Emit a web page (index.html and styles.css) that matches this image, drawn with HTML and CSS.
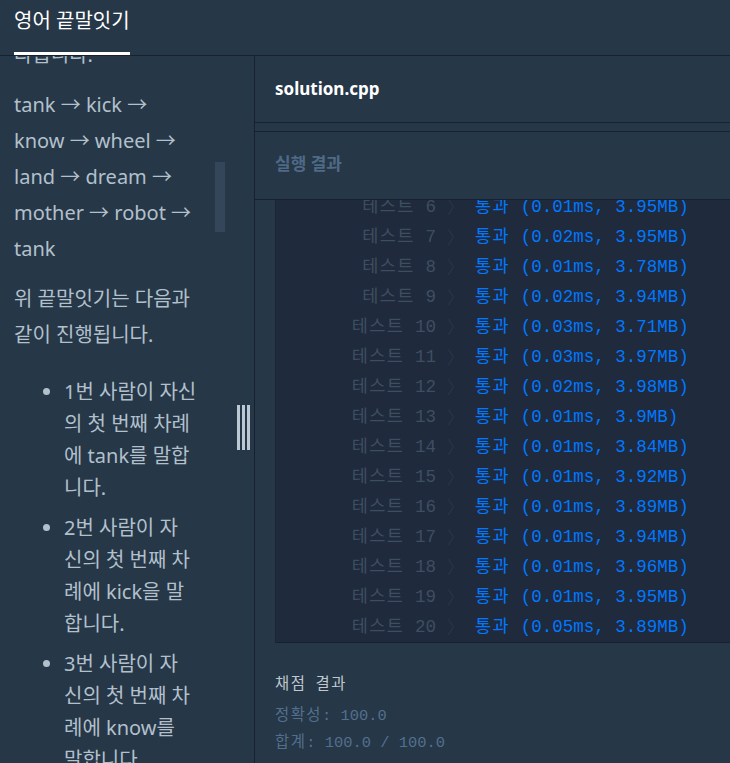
FILE: index.html
```html
<!DOCTYPE html>
<html lang="ko">
<head>
<meta charset="utf-8">
<title>영어 끝말잇기</title>
<link rel="stylesheet" href="styles.css">
</head>
<body>
<header class="topbar">
  <div class="tab">영어 끝말잇기</div>
</header>
<div class="main">
  <section class="left">
    <div class="desc">
      <p class="para">다릅니다.</p>
      <p class="para">tank → kick →<br>know → wheel →<br>land → dream →<br>mother → robot →<br>tank</p>
      <p class="para">위 끝말잇기는 다음과<br>같이 진행됩니다.</p>
      <ul class="steps">
        <li>1번 사람이 자신<br>의 첫 번째 차례<br>에 tank를 말합<br>니다.</li>
        <li>2번 사람이 자<br>신의 첫 번째 차<br>례에 kick을 말<br>합니다.</li>
        <li>3번 사람이 자<br>신의 첫 번째 차<br>례에 know를<br>말합니다.</li>
      </ul>
    </div>
    <div class="thumb"></div>
    <div class="grip"><span></span><span></span><span></span></div>
  </section>
  <section class="right">
    <div class="filebar">solution.cpp</div>
    <div class="editor-gap"></div>
    <div class="result-head">실행 결과</div>
    <div class="result-wrap">
      <div class="result-box">
        <div class="rows">
          <div class="row"><span class="lbl"><span class="k">테스트</span> 6</span><span class="arr">〉</span><span class="ok"><span class="k">통과</span> (0.01ms, 3.95MB)</span></div>
          <div class="row"><span class="lbl"><span class="k">테스트</span> 7</span><span class="arr">〉</span><span class="ok"><span class="k">통과</span> (0.02ms, 3.95MB)</span></div>
          <div class="row"><span class="lbl"><span class="k">테스트</span> 8</span><span class="arr">〉</span><span class="ok"><span class="k">통과</span> (0.01ms, 3.78MB)</span></div>
          <div class="row"><span class="lbl"><span class="k">테스트</span> 9</span><span class="arr">〉</span><span class="ok"><span class="k">통과</span> (0.02ms, 3.94MB)</span></div>
          <div class="row"><span class="lbl"><span class="k">테스트</span> 10</span><span class="arr">〉</span><span class="ok"><span class="k">통과</span> (0.03ms, 3.71MB)</span></div>
          <div class="row"><span class="lbl"><span class="k">테스트</span> 11</span><span class="arr">〉</span><span class="ok"><span class="k">통과</span> (0.03ms, 3.97MB)</span></div>
          <div class="row"><span class="lbl"><span class="k">테스트</span> 12</span><span class="arr">〉</span><span class="ok"><span class="k">통과</span> (0.02ms, 3.98MB)</span></div>
          <div class="row"><span class="lbl"><span class="k">테스트</span> 13</span><span class="arr">〉</span><span class="ok"><span class="k">통과</span> (0.01ms, 3.9MB)</span></div>
          <div class="row"><span class="lbl"><span class="k">테스트</span> 14</span><span class="arr">〉</span><span class="ok"><span class="k">통과</span> (0.01ms, 3.84MB)</span></div>
          <div class="row"><span class="lbl"><span class="k">테스트</span> 15</span><span class="arr">〉</span><span class="ok"><span class="k">통과</span> (0.01ms, 3.92MB)</span></div>
          <div class="row"><span class="lbl"><span class="k">테스트</span> 16</span><span class="arr">〉</span><span class="ok"><span class="k">통과</span> (0.01ms, 3.89MB)</span></div>
          <div class="row"><span class="lbl"><span class="k">테스트</span> 17</span><span class="arr">〉</span><span class="ok"><span class="k">통과</span> (0.01ms, 3.94MB)</span></div>
          <div class="row"><span class="lbl"><span class="k">테스트</span> 18</span><span class="arr">〉</span><span class="ok"><span class="k">통과</span> (0.01ms, 3.96MB)</span></div>
          <div class="row"><span class="lbl"><span class="k">테스트</span> 19</span><span class="arr">〉</span><span class="ok"><span class="k">통과</span> (0.01ms, 3.95MB)</span></div>
          <div class="row"><span class="lbl"><span class="k">테스트</span> 20</span><span class="arr">〉</span><span class="ok"><span class="k">통과</span> (0.05ms, 3.89MB)</span></div>
        </div>
      </div>
      <div class="score">
        <div class="score-title"><span class="k">채점</span> <span class="k">결과</span></div>
        <div class="score-line"><span class="k">정확성</span>: 100.0</div>
        <div class="score-line"><span class="k">합계</span>: 100.0 / 100.0</div>
      </div>
    </div>
  </section>
</div>
</body>
</html>
```

FILE: styles.css
```css
html, body {
  margin: 0;
  padding: 0;
}
body {
  width: 730px;
  height: 763px;
  overflow: hidden;
  background: #263747;
  font-family: "Noto Sans", "Noto Sans CJK KR", sans-serif;
  display: flex;
  flex-direction: column;
}
.topbar {
  height: 55px;
  border-bottom: 1px solid #172130;
  display: flex;
  flex-shrink: 0;
}
.tab {
  margin-left: 14px;
  height: 55px;
  box-sizing: border-box;
  border-bottom: 3px solid #ffffff;
  color: #ffffff;
  font-size: 20px;
  line-height: 42px;
  white-space: nowrap;
}
.main {
  flex: 1;
  display: flex;
  min-height: 0;
}
.left {
  width: 254px;
  flex-shrink: 0;
  border-right: 1px solid #172130;
  overflow: hidden;
  position: relative;
}
.desc {
  margin-top: -19px;
  padding-left: 14px;
  color: #b2c0cc;
  font-size: 20px;
  line-height: 36px;
  white-space: nowrap;
}
.para {
  margin: 0 0 14px 0;
}
.steps {
  margin: 23px 0 0 0;
  padding-left: 50px;
  line-height: 32px;
}
.steps li {
  margin-bottom: 8px;
}
.thumb {
  position: absolute;
  left: 215px;
  top: 106px;
  width: 10px;
  height: 70px;
  background: #34465a;
}
.grip {
  position: absolute;
  left: 237px;
  top: 349px;
  height: 45px;
  display: flex;
  gap: 2px;
}
.grip span {
  width: 3px;
  height: 45px;
  background: #bcc8d3;
}
.right {
  flex: 1;
  display: flex;
  flex-direction: column;
  min-width: 0;
}
.filebar {
  height: 66px;
  border-bottom: 1px solid #172130;
  padding-left: 20px;
  color: #ffffff;
  font-weight: 700;
  font-size: 17px;
  line-height: 66px;
  flex-shrink: 0;
}
.editor-gap {
  height: 8px;
  border-bottom: 1px solid #172130;
  flex-shrink: 0;
}
.result-head {
  height: 67px;
  border-bottom: 1px solid #172130;
  padding-left: 20px;
  color: #4f6a86;
  font-weight: 700;
  font-size: 17px;
  line-height: 64px;
  flex-shrink: 0;
}
.result-wrap {
  padding-left: 20px;
  font-family: "Liberation Mono", "Noto Sans CJK KR", monospace;
}
.result-box {
  height: 442px;
  background: #1f2a3c;
  border-left: 1px solid #1a2433;
  border-bottom: 1px solid #172130;
  overflow: hidden;
}
.rows {
  margin-top: -8px;
}
.row {
  display: grid;
  grid-template-columns: 160px 10px auto;
  column-gap: 11px;
  height: 30px;
  line-height: 30px;
  font-size: 17.5px;
  white-space: nowrap;
}
.k {
  letter-spacing: 1.5px;
}
.lbl {
  text-align: right;
  color: #3e4e61;
}
.arr {
  color: #2c3a4b;
  font-family: "Noto Sans CJK KR", sans-serif;
  font-weight: 300;
}
.ok {
  margin-left: 7px;
  color: #0078ff;
}
.score {
  padding-top: 30px;
  font-size: 15.4px;
}
.score-title {
  line-height: 24px;
  color: #bfc8d0;
  margin-bottom: 6px;
}
.score-line {
  line-height: 27px;
  color: #52708e;
}
```
